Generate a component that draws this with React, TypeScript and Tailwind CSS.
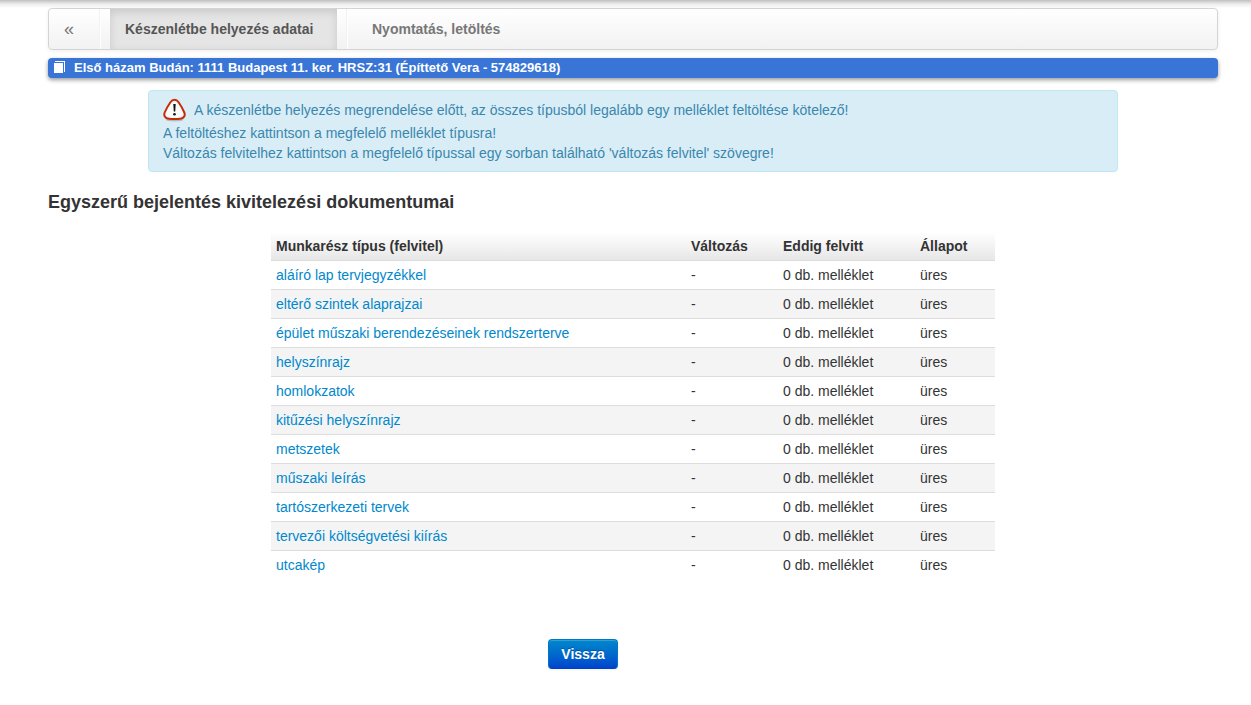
import React from 'react';

interface DocumentType {
  name: string;
  change: string;
  count: number;
  state: string;
}

const documentTypes: DocumentType[] = [
  { name: 'aláíró lap tervjegyzékkel', change: '-', count: 0, state: 'üres' },
  { name: 'eltérő szintek alaprajzai', change: '-', count: 0, state: 'üres' },
  { name: 'épület műszaki berendezéseinek rendszerterve', change: '-', count: 0, state: 'üres' },
  { name: 'helyszínrajz', change: '-', count: 0, state: 'üres' },
  { name: 'homlokzatok', change: '-', count: 0, state: 'üres' },
  { name: 'kitűzési helyszínrajz', change: '-', count: 0, state: 'üres' },
  { name: 'metszetek', change: '-', count: 0, state: 'üres' },
  { name: 'műszaki leírás', change: '-', count: 0, state: 'üres' },
  { name: 'tartószerkezeti tervek', change: '-', count: 0, state: 'üres' },
  { name: 'tervezői költségvetési kiírás', change: '-', count: 0, state: 'üres' },
  { name: 'utcakép', change: '-', count: 0, state: 'üres' },
];

const WarningIcon = () => (
  <svg className="h-6 w-6 shrink-0" viewBox="0 0 24 24" aria-hidden="true">
    <ellipse cx="11.500" cy="21.800" rx="9" ry="1.600" fill="#000" opacity=".2" />
    <path d="M11.500 1.800c1.700 0 3 .8 4.100 2.400 2.200 3.200 4.300 6.900 5.700 10.300 1.100 2.800-.1 5.300-2.900 5.900-4.400.9-9.400.9-13.800 0-2.800-.6-4-3.100-2.900-5.900C3.100 11.100 5.200 7.400 7.400 4.200c1.100-1.600 2.400-2.400 4.100-2.400z" fill="#fafafa" stroke="#c62b08" strokeWidth="2" />
    <path d="M10.300 6h2.400l-.5 7.600h-1.400z" fill="#111" />
    <circle cx="11.500" cy="16.200" r="1.300" fill="#111" />
  </svg>
);

const PagesIcon = () => (
  <svg className="h-3.5 w-3 shrink-0" viewBox="0 0 12 14" shapeRendering="crispEdges" aria-hidden="true">
    <path d="M1 0h10v11h-1V1H1z" fill="#fff" />
    <path d="M0 2h9v10H0z" fill="#fff" />
  </svg>
);

const Divider = () => <li className="mx-[9px] h-10 border-l border-r border-l-[#f2f2f2] border-r-white" />;

const Navbar = () => (
  <nav className="rounded border border-[#d4d4d4] bg-linear-to-b from-white to-[#f2f2f2] shadow-[0_1px_4px_rgba(0,0,0,0.065)]">
    <ul className="flex h-10 items-center font-bold leading-10">
      <li className="w-[41px] pl-[15px]">
        <a href="#" className="block text-lg font-normal leading-10 text-[#777]">«</a>
      </li>
      <Divider />
      <li>
        <a href="#" className="block min-w-[227px] bg-[#e5e5e5] px-[15px] text-[#555] shadow-[inset_0_3px_8px_rgba(0,0,0,0.125)]">
          Készenlétbe helyezés adatai
        </a>
      </li>
      <Divider />
      <li>
        <a href="#" className="block px-[15px] text-[#777]">Nyomtatás, letöltés</a>
      </li>
    </ul>
  </nav>
);

const DocumentTable = () => (
  <table className="mx-auto w-[724px] table-fixed text-left">
    <colgroup>
      <col className="w-[415px]" />
      <col className="w-[92px]" />
      <col className="w-[137px]" />
      <col />
    </colgroup>
    <thead>
      <tr className="bg-linear-to-b from-white to-[#e6e6e6]">
        <th className="px-[5px] py-1">Munkarész típus (felvitel)</th>
        <th className="px-[5px] py-1">Változás</th>
        <th className="px-[5px] py-1">Eddig felvitt</th>
        <th className="px-[5px] py-1">Állapot</th>
      </tr>
    </thead>
    <tbody>
      {documentTypes.map(doc => (
        <tr key={doc.name} className="border-t border-[#ddd] even:bg-[#f4f4f4]">
          <td className="px-[5px] py-1"><a href="#" className="text-[#0088cc]">{doc.name}</a></td>
          <td className="px-[5px] py-1">{doc.change}</td>
          <td className="px-[5px] py-1">{doc.count} db. melléklet</td>
          <td className="px-[5px] py-1">{doc.state}</td>
        </tr>
      ))}
    </tbody>
  </table>
);

const App: React.FC = () => {
  return (
    <div className="min-h-screen bg-white font-['Liberation_Sans',Arial,sans-serif] text-sm leading-5 text-[#333]">
      <div className="h-2 bg-linear-to-b from-[#c0c0c0] via-[#ececec] to-white" />
      <div className="pl-12 pr-[33px] pb-9">
        <Navbar />

        <div className="mt-2 flex items-center gap-2 rounded bg-[#3875d7] pl-1.5 text-[13px] font-bold leading-5 text-white shadow-[0_2px_4px_rgba(0,0,0,0.4)]">
          <PagesIcon />
          <span>Első házam Budán: 1111 Budapest 11. ker. HRSZ:31 (Építtető Vera - 574829618)</span>
        </div>

        <div role="alert" className="mx-[100px] mt-3 rounded border border-[#bce8f1] bg-[#d9edf7] px-3.5 py-2 text-[#3a87ad]">
          <p className="flex h-6 items-center gap-[7px] pb-0.5">
            <WarningIcon />
            <span>A készenlétbe helyezés megrendelése előtt, az összes típusból legalább egy melléklet feltöltése kötelező!</span>
          </p>
          <p>A feltöltéshez kattintson a megfelelő melléklet típusra!</p>
          <p>Változás felvitelhez kattintson a megfelelő típussal egy sorban található 'változás felvitel' szövegre!</p>
        </div>

        <h1 className="mt-5 mb-5 text-lg font-bold leading-5">Egyszerű bejelentés kivitelezési dokumentumai</h1>

        <DocumentTable />

        <div className="mt-15 mr-[100px] flex justify-center">
          <button
            type="button"
            className="cursor-pointer rounded border border-[#0077c4] border-b-[#0044b8] bg-linear-to-b from-[#0088cc] to-[#0044cc] px-3 py-1 font-bold text-white shadow-[inset_0_1px_0_rgba(255,255,255,0.2),0_1px_2px_rgba(0,0,0,0.05)] [text-shadow:0_-1px_0_rgba(0,0,0,0.25)]"
          >
            Vissza
          </button>
        </div>
      </div>
    </div>
  );
};

export default App;
